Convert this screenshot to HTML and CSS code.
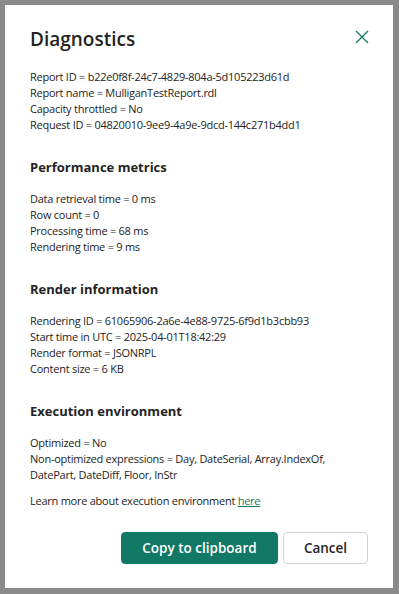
FILE: index.html
```html
<!DOCTYPE html>
<html>

<head>
    <meta name="viewport" content="width=device-width, initial-scale=1.0">
    <title>Diagnostics</title>
    <link rel="stylesheet" href="styles.css">
</head>

<body>
    <div class="dialog">
        <div class="dialog-header">
            <h1 class="dialog-title">Diagnostics</h1>
            <a class="close-btn" title="Close">
                <svg width="14" height="14" viewBox="0 0 14 14">
                    <path d="M1 1 L13 13 M13 1 L1 13" stroke="#117865" stroke-width="1.3" fill="none" />
                </svg>
            </a>
        </div>
        <div class="info-block">
            <div>Report ID = b22e0f8f-24c7-4829-804a-5d105223d61d</div>
            <div>Report name = MulliganTestReport.rdl</div>
            <div>Capacity throttled = No</div>
            <div>Request ID = 04820010-9ee9-4a9e-9dcd-144c271b4dd1</div>
        </div>
        <h3 class="section-title">Performance metrics</h3>
        <div class="info-block">
            <div>Data retrieval time = 0 ms</div>
            <div>Row count = 0</div>
            <div>Processing time = 68 ms</div>
            <div>Rendering time = 9 ms</div>
        </div>
        <h3 class="section-title">Render information</h3>
        <div class="info-block">
            <div>Rendering ID = 61065906-2a6e-4e88-9725-6f9d1b3cbb93</div>
            <div>Start time in UTC = 2025-04-01T18:42:29</div>
            <div>Render format = JSONRPL</div>
            <div>Content size = 6 KB</div>
        </div>
        <h3 class="section-title">Execution environment</h3>
        <div class="info-block">
            <div>Optimized = No</div>
            <div>Non-optimized expressions = Day, DateSerial, Array.IndexOf, DatePart, DateDiff, Floor, InStr</div>
        </div>
        <p class="learn-more">Learn more about execution environment <a href="#">here</a></p>
        <div class="dialog-actions">
            <a class="btn btn-primary">Copy to clipboard</a>
            <a class="btn btn-secondary">Cancel</a>
        </div>
    </div>
</body>

</html>
```

FILE: styles.css
```css
html {
    font-family: "Open Sans", "Noto Sans", sans-serif;
    color: #242424;
}

body {
    margin: 0;
    padding: 5px 6px 6px 5px;
    background-color: #8a8a8a;
}

.dialog {
    background-color: white;
    height: 583px;
    box-sizing: border-box;
    padding: 20px 24px 24px 25px;
    display: flex;
    flex-direction: column;
}

.dialog-header {
    display: flex;
    justify-content: space-between;
    align-items: flex-start;
    margin-bottom: 16px;
}

.dialog-title {
    font-size: 19px;
    font-weight: 600;
    line-height: 28px;
    margin: 0;
}

.close-btn {
    display: flex;
    margin-top: 5px;
    cursor: pointer;
}

.info-block {
    font-size: 11px;
    line-height: 16px;
    letter-spacing: -0.25px;
}

.section-title {
    font-size: 13px;
    font-weight: 700;
    line-height: 20px;
    margin: 24px 0 14px;
}

.learn-more {
    font-size: 11px;
    line-height: 16px;
    letter-spacing: -0.25px;
    margin: 10px 0 0;
}

.learn-more a {
    color: #117865;
}

.dialog-actions {
    display: flex;
    justify-content: flex-end;
    gap: 5px;
    margin-top: auto;
}

.btn {
    display: block;
    box-sizing: border-box;
    height: 32px;
    line-height: 30px;
    font-size: 13.5px;
    font-weight: 600;
    border-radius: 4px;
    cursor: pointer;
    text-decoration: none;
    text-align: center;
}

.btn-primary {
    width: 157px;
    background-color: #117865;
    border: 1px solid #117865;
    color: white;
}

.btn-secondary {
    width: 85px;
    margin-right: 1px;
    background-color: white;
    border: 1px solid #d1d1d1;
    color: #242424;
}
```
